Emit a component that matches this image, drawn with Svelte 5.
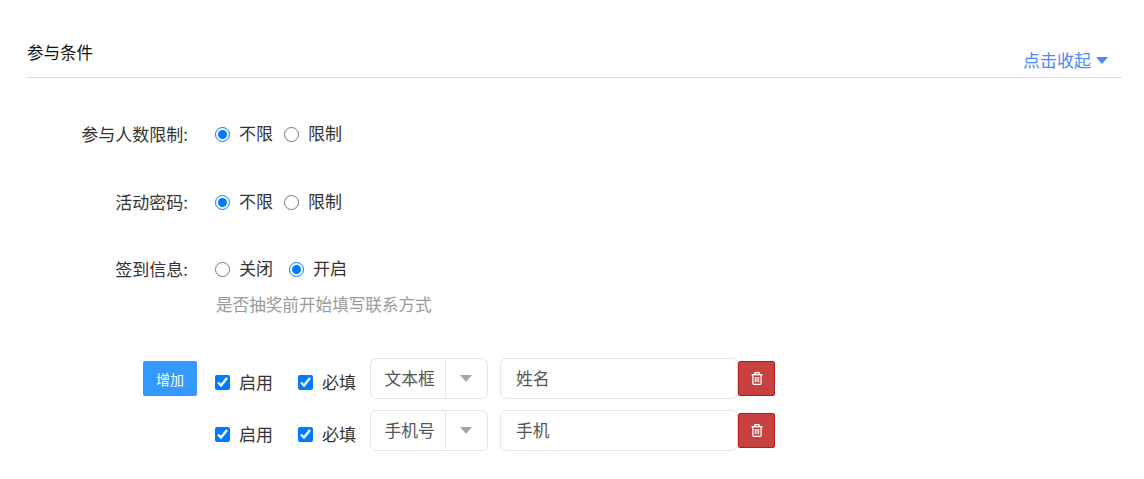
<script>
  const rows = [
    { type: '文本框', name: '姓名', add: true },
    { type: '手机号', name: '手机', add: false }
  ];
</script>

<main class="page">
  <header class="head">
    <h2>参与条件</h2>
    <button class="toggle" type="button">点击收起<span class="caret"></span></button>
  </header>

  <div class="form-row first">
    <div class="label">参与人数限制:</div>
    <div class="options">
      <label class="opt"><input type="radio" name="a" checked />不限</label>
      <label class="opt"><input type="radio" name="a" />限制</label>
    </div>
  </div>

  <div class="form-row second">
    <div class="label">活动密码:</div>
    <div class="options">
      <label class="opt"><input type="radio" name="b" checked />不限</label>
      <label class="opt"><input type="radio" name="b" />限制</label>
    </div>
  </div>

  <div class="form-row third">
    <div class="label">签到信息:</div>
    <div class="options wide">
      <label class="opt"><input type="radio" name="c" />关闭</label>
      <label class="opt"><input type="radio" name="c" checked />开启</label>
    </div>
  </div>
  <p class="hint">是否抽奖前开始填写联系方式</p>

  <div class="fields">
    {#each rows as row}
      <div class="field-row">
        <div class="add-cell">
          {#if row.add}<button class="add" type="button">增加</button>{/if}
        </div>
        <label class="check"><input type="checkbox" checked />启用</label>
        <label class="check"><input type="checkbox" checked />必填</label>
        <div class="select">
          <span class="select-value">{row.type}</span>
          <span class="select-arrow"><i></i></span>
        </div>
        <div class="text-input">{row.name}</div>
        <button class="del" type="button" aria-label="删除">
          <svg width="12" height="13" viewBox="0 0 12 13" fill="none" stroke="#fff" stroke-width="1.3">
            <path d="M0.5 2.7h11" />
            <path d="M3.8 2.5V1.2c0-.3.2-.5.5-.5h3.4c.3 0 .5.2.5.5v1.3" />
            <path d="M1.9 2.7v8.6c0 .6.4 1 1 1h6.2c.6 0 1-.4 1-1V2.7" />
            <path d="M4.3 5v5.2M6 5v5.2M7.7 5v5.2" stroke-width="1" />
          </svg>
        </button>
      </div>
    {/each}
  </div>
</main>

<style>
  :global(body) {
    margin: 0;
    background: #fff;
  }
  .page {
    width: 1144px;
    height: 479px;
    box-sizing: border-box;
    padding: 0 22px 0 26px;
    overflow: hidden;
    font-family: "Noto Sans CJK SC", "Noto Sans", sans-serif;
    font-size: 16.8px;
    color: #333;
  }
  .head {
    height: 78px;
    box-sizing: border-box;
    display: flex;
    justify-content: space-between;
    border-bottom: 1px solid #ddd;
  }
  h2 {
    margin: 40px 0 0 1px;
    font-size: 16.5px;
    line-height: 24px;
    font-weight: 400;
    color: #111;
  }
  .toggle {
    margin: 48px 14px 0 0;
    padding: 0;
    height: 24px;
    border: 0;
    background: none;
    display: flex;
    align-items: center;
    font: inherit;
    font-size: 17px;
    line-height: 24px;
    color: #4d88ff;
  }
  .caret {
    margin-left: 5px;
    border-left: 6.5px solid transparent;
    border-right: 6.5px solid transparent;
    border-top: 7px solid #4d88ff;
  }
  .form-row {
    display: flex;
    align-items: center;
    height: 24px;
    font-size: 17px;
  }
  .first { margin-top: 44px; }
  .second { margin-top: 44px; }
  .third { margin-top: 43px; }
  .label {
    width: 162px;
    padding-bottom: 2px;
    text-align: right;
    color: #333;
  }
  .options {
    display: flex;
    margin-left: 27px;
    gap: 11px;
  }
  .options.wide { gap: 16px; }
  .opt, .check {
    display: flex;
    align-items: center;
    padding-bottom: 2px;
    line-height: 24px;
    color: #333;
  }
  input {
    width: 15px;
    height: 15px;
    margin: 2px 9px 0 0;
    accent-color: #007bff;
  }
  .hint {
    margin: 11px 0 0 190px;
    font-size: 16.6px;
    line-height: 24px;
    color: #999;
  }
  .fields {
    margin-top: 42px;
    display: flex;
    flex-direction: column;
    gap: 11px;
  }
  .field-row {
    display: flex;
    align-items: center;
    height: 41px;
  }
  .add-cell {
    width: 171px;
    padding-left: 117px;
    box-sizing: border-box;
    flex: none;
  }
  .add {
    display: block;
    width: 54px;
    height: 35px;
    padding: 0;
    border: 0;
    border-radius: 2px;
    background: #3399ff;
    color: #fff;
    font: inherit;
    font-size: 14px;
  }
  .add-cell + .check { margin-left: 18px; }
  .check {
    width: 83px;
    margin-top: 8px;
    font-size: 17px;
  }
  .check + .check { width: 72px; }
  .select {
    width: 118px;
    height: 41px;
    box-sizing: border-box;
    border: 1px solid #e6e6e6;
    border-radius: 6px;
    display: flex;
    color: #555;
  }
  .select-value {
    width: 75px;
    box-sizing: border-box;
    padding-left: 13.5px;
    line-height: 39px;
    border-right: 1px solid #e6e6e6;
    flex: none;
  }
  .select-arrow {
    flex: 1;
    display: flex;
    align-items: center;
    justify-content: center;
    padding-right: 2px;
  }
  .select-arrow i {
    border-left: 6px solid transparent;
    border-right: 6px solid transparent;
    border-top: 7px solid #a6a6a6;
  }
  .text-input {
    width: 238px;
    height: 41px;
    box-sizing: border-box;
    margin-left: 12px;
    padding-left: 15px;
    border: 1px solid #e6e6e6;
    border-radius: 6px;
    line-height: 39px;
    color: #555;
  }
  .del {
    width: 37px;
    height: 35px;
    padding: 0;
    border: 1px solid #b71c1c;
    border-radius: 2px;
    background: #c94040;
    display: flex;
    align-items: center;
    justify-content: center;
  }
</style>
